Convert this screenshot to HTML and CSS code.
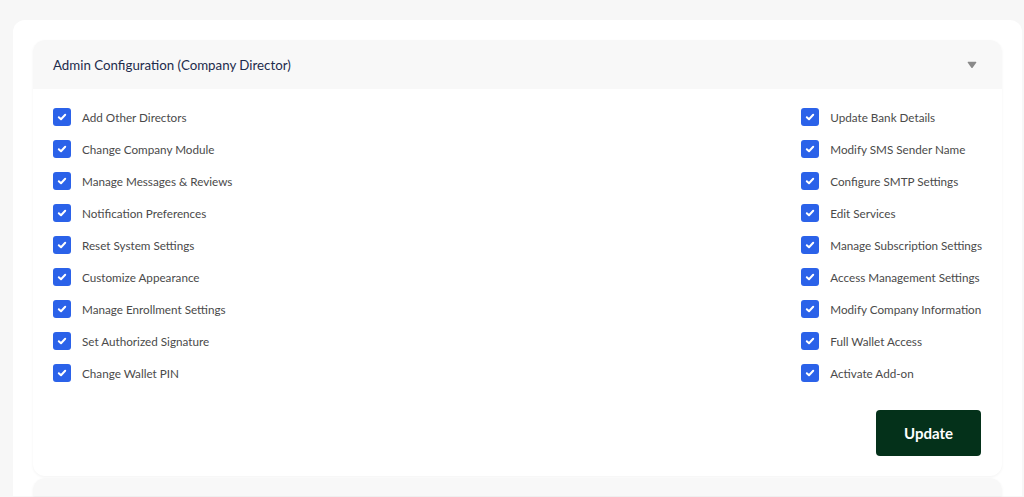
FILE: index.html
```html
<!DOCTYPE html>
<html>
<head>
<meta charset="utf-8">
<link rel="stylesheet" href="styles.css">
</head>
<body>
<div class="outer">
  <div class="card">
    <div class="card-head">
      <span class="title">Admin Configuration (Company Director)</span>
      <svg class="caret" width="10" height="8" viewBox="0 0 10 8"><path d="M1.2 0.8 H8.8 Q9.8 0.8 9.2 1.8 L5.8 6.6 Q5 7.6 4.2 6.6 L0.8 1.8 Q0.2 0.8 1.2 0.8 Z" fill="#8a8a8a"/></svg>
    </div>
    <div class="card-body">
      <div class="cols">
        <div class="col">
          <label class="item"><span class="cb"><svg width="10" height="8" viewBox="0 0 10 8"><path d="M1.8 4.2 L4 6.2 L8.2 1.8" fill="none" stroke="#fff" stroke-width="2" stroke-linecap="round" stroke-linejoin="round"/></svg></span>Add Other Directors</label>
          <label class="item"><span class="cb"><svg width="10" height="8" viewBox="0 0 10 8"><path d="M1.8 4.2 L4 6.2 L8.2 1.8" fill="none" stroke="#fff" stroke-width="2" stroke-linecap="round" stroke-linejoin="round"/></svg></span>Change Company Module</label>
          <label class="item"><span class="cb"><svg width="10" height="8" viewBox="0 0 10 8"><path d="M1.8 4.2 L4 6.2 L8.2 1.8" fill="none" stroke="#fff" stroke-width="2" stroke-linecap="round" stroke-linejoin="round"/></svg></span>Manage Messages &amp; Reviews</label>
          <label class="item"><span class="cb"><svg width="10" height="8" viewBox="0 0 10 8"><path d="M1.8 4.2 L4 6.2 L8.2 1.8" fill="none" stroke="#fff" stroke-width="2" stroke-linecap="round" stroke-linejoin="round"/></svg></span>Notification Preferences</label>
          <label class="item"><span class="cb"><svg width="10" height="8" viewBox="0 0 10 8"><path d="M1.8 4.2 L4 6.2 L8.2 1.8" fill="none" stroke="#fff" stroke-width="2" stroke-linecap="round" stroke-linejoin="round"/></svg></span>Reset System Settings</label>
          <label class="item"><span class="cb"><svg width="10" height="8" viewBox="0 0 10 8"><path d="M1.8 4.2 L4 6.2 L8.2 1.8" fill="none" stroke="#fff" stroke-width="2" stroke-linecap="round" stroke-linejoin="round"/></svg></span>Customize Appearance</label>
          <label class="item"><span class="cb"><svg width="10" height="8" viewBox="0 0 10 8"><path d="M1.8 4.2 L4 6.2 L8.2 1.8" fill="none" stroke="#fff" stroke-width="2" stroke-linecap="round" stroke-linejoin="round"/></svg></span>Manage Enrollment Settings</label>
          <label class="item"><span class="cb"><svg width="10" height="8" viewBox="0 0 10 8"><path d="M1.8 4.2 L4 6.2 L8.2 1.8" fill="none" stroke="#fff" stroke-width="2" stroke-linecap="round" stroke-linejoin="round"/></svg></span>Set Authorized Signature</label>
          <label class="item"><span class="cb"><svg width="10" height="8" viewBox="0 0 10 8"><path d="M1.8 4.2 L4 6.2 L8.2 1.8" fill="none" stroke="#fff" stroke-width="2" stroke-linecap="round" stroke-linejoin="round"/></svg></span>Change Wallet PIN</label>
        </div>
        <div class="col">
          <label class="item"><span class="cb"><svg width="10" height="8" viewBox="0 0 10 8"><path d="M1.8 4.2 L4 6.2 L8.2 1.8" fill="none" stroke="#fff" stroke-width="2" stroke-linecap="round" stroke-linejoin="round"/></svg></span>Update Bank Details</label>
          <label class="item"><span class="cb"><svg width="10" height="8" viewBox="0 0 10 8"><path d="M1.8 4.2 L4 6.2 L8.2 1.8" fill="none" stroke="#fff" stroke-width="2" stroke-linecap="round" stroke-linejoin="round"/></svg></span>Modify SMS Sender Name</label>
          <label class="item"><span class="cb"><svg width="10" height="8" viewBox="0 0 10 8"><path d="M1.8 4.2 L4 6.2 L8.2 1.8" fill="none" stroke="#fff" stroke-width="2" stroke-linecap="round" stroke-linejoin="round"/></svg></span>Configure SMTP Settings</label>
          <label class="item"><span class="cb"><svg width="10" height="8" viewBox="0 0 10 8"><path d="M1.8 4.2 L4 6.2 L8.2 1.8" fill="none" stroke="#fff" stroke-width="2" stroke-linecap="round" stroke-linejoin="round"/></svg></span>Edit Services</label>
          <label class="item"><span class="cb"><svg width="10" height="8" viewBox="0 0 10 8"><path d="M1.8 4.2 L4 6.2 L8.2 1.8" fill="none" stroke="#fff" stroke-width="2" stroke-linecap="round" stroke-linejoin="round"/></svg></span>Manage Subscription Settings</label>
          <label class="item"><span class="cb"><svg width="10" height="8" viewBox="0 0 10 8"><path d="M1.8 4.2 L4 6.2 L8.2 1.8" fill="none" stroke="#fff" stroke-width="2" stroke-linecap="round" stroke-linejoin="round"/></svg></span>Access Management Settings</label>
          <label class="item"><span class="cb"><svg width="10" height="8" viewBox="0 0 10 8"><path d="M1.8 4.2 L4 6.2 L8.2 1.8" fill="none" stroke="#fff" stroke-width="2" stroke-linecap="round" stroke-linejoin="round"/></svg></span>Modify Company Information</label>
          <label class="item"><span class="cb"><svg width="10" height="8" viewBox="0 0 10 8"><path d="M1.8 4.2 L4 6.2 L8.2 1.8" fill="none" stroke="#fff" stroke-width="2" stroke-linecap="round" stroke-linejoin="round"/></svg></span>Full Wallet Access</label>
          <label class="item"><span class="cb"><svg width="10" height="8" viewBox="0 0 10 8"><path d="M1.8 4.2 L4 6.2 L8.2 1.8" fill="none" stroke="#fff" stroke-width="2" stroke-linecap="round" stroke-linejoin="round"/></svg></span>Activate Add-on</label>
        </div>
      </div>
      <div class="actions">
        <button class="btn">Update</button>
      </div>
    </div>
  </div>
  <div class="card next">
    <div class="card-head short"></div>
  </div>
</div>
</body>
</html>
```
FILE: styles.css
```css
* { box-sizing: border-box; }
html, body { margin: 0; padding: 0; }
body {
  background: #f7f7f7;
  font-family: Lato, "Open Sans", sans-serif;
  height: 497px;
  overflow: hidden;
}
.outer {
  margin: 20px 2px 0 13px;
  background: #fff;
  border-radius: 12px 12px 0 0;
  padding: 20px 20px 0 20px;
}
.card {
  background: #fff;
  border-radius: 12px;
  overflow: hidden;
  box-shadow: 0 1px 3px rgba(0,0,0,0.05);
}
.card.next { margin-top: 2px; border-radius: 12px 12px 0 0; }
.card-head {
  height: 49px;
  background: #f8f8f8;
  display: flex;
  align-items: center;
  justify-content: space-between;
  padding: 0 25px 0 20px;
}
.card-head.short { height: 18px; }
.title {
  font-size: 13.3px;
  color: #1d2b4c;
}
.caret { margin-top: 1px; }
.card-body {
  padding: 12px 20px 20px 20px;
}
.cols {
  display: flex;
  justify-content: space-between;
}
.col {
  display: flex;
  flex-direction: column;
}
.item {
  display: flex;
  align-items: center;
  height: 32px;
  font-size: 11.7px;
  color: #4a4a4a;
}
.cb {
  width: 18px;
  height: 18px;
  border-radius: 3px;
  background: #2b62e9;
  display: flex;
  align-items: center;
  justify-content: center;
  margin-right: 11px;
  flex: none;
}
.actions {
  display: flex;
  justify-content: flex-end;
  margin-top: 21px;
}
.btn {
  width: 105px;
  height: 46px;
  margin-right: 1px;
  background: #04311a;
  color: #fff;
  border: none;
  border-radius: 4px;
  font-family: Lato, sans-serif;
  font-weight: 700;
  font-size: 15px;
}
```
